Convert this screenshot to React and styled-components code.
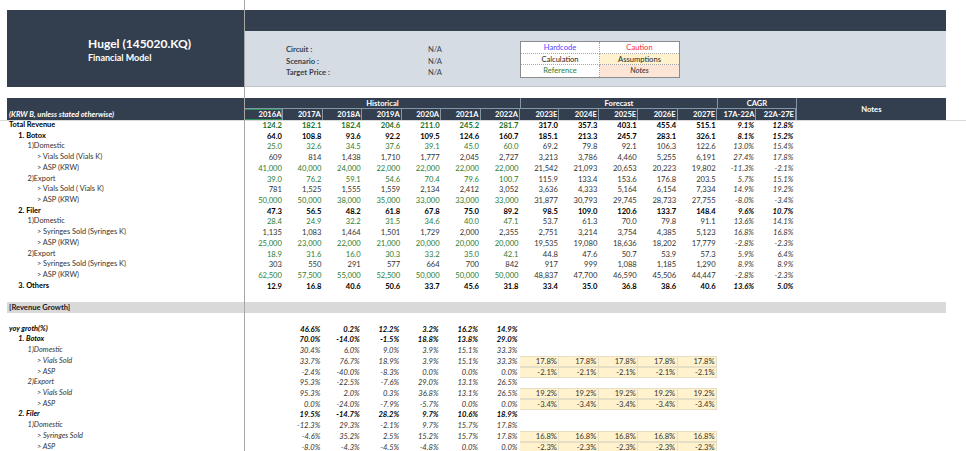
import styled, { createGlobalStyle } from "styled-components"

const GlobalStyle = createGlobalStyle`
    html, body {
        margin: 0;
        padding: 0;
        background: #FFFFFF;
    }
    body {
        width: 966px;
        height: 451px;
        overflow: hidden;
        font-family: Lato, "Open Sans", sans-serif;
    }
`

const GREEN = "#2E7D32"
const DARK = "#333F4F"

const YEARS = ["2016A", "2017A", "2018A", "2019A", "2020A", "2021A", "2022A", "2023E", "2024E", "2025E", "2026E", "2027E", "17A-22A", "22A-27E"]

const modelRows = [
    { label: "Total Revenue", level: 0, bold: true, hist: true, v: ["124.2", "182.1", "182.4", "204.6", "211.0", "245.2", "281.7", "317.0", "357.3", "403.1", "455.4", "515.1", "9.1%", "12.8%"] },
    { label: "1. Botox", level: 1, bold: true, v: ["64.0", "108.8", "93.6", "92.2", "109.5", "124.6", "160.7", "185.1", "213.3", "245.7", "283.1", "326.1", "8.1%", "15.2%"] },
    { label: "1)Domestic", level: 2, hist: true, v: ["25.0", "32.6", "34.5", "37.6", "39.1", "45.0", "60.0", "69.2", "79.8", "92.1", "106.3", "122.6", "13.0%", "15.4%"] },
    { label: "> Vials Sold (Vials K)", level: 3, v: ["609", "814", "1,438", "1,710", "1,777", "2,045", "2,727", "3,213", "3,786", "4,460", "5,255", "6,191", "27.4%", "17.8%"] },
    { label: "> ASP (KRW)", level: 3, hist: true, v: ["41,000", "40,000", "24,000", "22,000", "22,000", "22,000", "22,000", "21,542", "21,093", "20,653", "20,223", "19,802", "-11.3%", "-2.1%"] },
    { label: "2)Export", level: 2, hist: true, v: ["39.0", "76.2", "59.1", "54.6", "70.4", "79.6", "100.7", "115.9", "133.4", "153.6", "176.8", "203.5", "5.7%", "15.1%"] },
    { label: "> Vials Sold ( Vials K)", level: 3, v: ["781", "1,525", "1,555", "1,559", "2,134", "2,412", "3,052", "3,636", "4,333", "5,164", "6,154", "7,334", "14.9%", "19.2%"] },
    { label: "> ASP (KRW)", level: 3, hist: true, v: ["50,000", "50,000", "38,000", "35,000", "33,000", "33,000", "33,000", "31,877", "30,793", "29,745", "28,733", "27,755", "-8.0%", "-3.4%"] },
    { label: "2. Filer", level: 1, bold: true, v: ["47.3", "56.5", "48.2", "61.8", "67.8", "75.0", "89.2", "98.5", "109.0", "120.6", "133.7", "148.4", "9.6%", "10.7%"] },
    { label: "1)Domestic", level: 2, hist: true, v: ["28.4", "24.9", "32.2", "31.5", "34.6", "40.0", "47.1", "53.7", "61.3", "70.0", "79.8", "91.1", "13.6%", "14.1%"] },
    { label: "> Syringes Sold (Syringes K)", level: 3, v: ["1,135", "1,083", "1,464", "1,501", "1,729", "2,000", "2,355", "2,751", "3,214", "3,754", "4,385", "5,123", "16.8%", "16.8%"] },
    { label: "> ASP (KRW)", level: 3, hist: true, v: ["25,000", "23,000", "22,000", "21,000", "20,000", "20,000", "20,000", "19,535", "19,080", "18,636", "18,202", "17,779", "-2.8%", "-2.3%"] },
    { label: "2)Export", level: 2, hist: true, v: ["18.9", "31.6", "16.0", "30.3", "33.2", "35.0", "42.1", "44.8", "47.6", "50.7", "53.9", "57.3", "5.9%", "6.4%"] },
    { label: "> Syringes Sold (Syringes K)", level: 3, v: ["303", "550", "291", "577", "664", "700", "842", "917", "999", "1,088", "1,185", "1,290", "8.9%", "8.9%"] },
    { label: "> ASP (KRW)", level: 3, hist: true, v: ["62,500", "57,500", "55,000", "52,500", "50,000", "50,000", "50,000", "48,837", "47,700", "46,590", "45,506", "44,447", "-2.8%", "-2.3%"] },
    { label: "3. Others", level: 1, bold: true, v: ["12.9", "16.8", "40.6", "50.6", "33.7", "45.6", "31.8", "33.4", "35.0", "36.8", "38.6", "40.6", "13.6%", "5.0%"] },
]

const growthRows = [
    { label: "yoy groth(%)", level: 0, bold: true, v: ["46.6%", "0.2%", "12.2%", "3.2%", "16.2%", "14.9%"] },
    { label: "1. Botox", level: 1, bold: true, v: ["70.0%", "-14.0%", "-1.5%", "18.8%", "13.8%", "29.0%"] },
    { label: "1)Domestic", level: 2, v: ["30.4%", "6.0%", "9.0%", "3.9%", "15.1%", "33.3%"] },
    { label: "> Vials Sold", level: 3, v: ["33.7%", "76.7%", "18.9%", "3.9%", "15.1%", "33.3%"], assume: "17.8%" },
    { label: "> ASP", level: 3, v: ["-2.4%", "-40.0%", "-8.3%", "0.0%", "0.0%", "0.0%"], assume: "-2.1%" },
    { label: "2)Export", level: 2, v: ["95.3%", "-22.5%", "-7.6%", "29.0%", "13.1%", "26.5%"] },
    { label: "> Vials Sold", level: 3, v: ["95.3%", "2.0%", "0.3%", "36.8%", "13.1%", "26.5%"], assume: "19.2%" },
    { label: "> ASP", level: 3, v: ["0.0%", "-24.0%", "-7.9%", "-5.7%", "0.0%", "0.0%"], assume: "-3.4%" },
    { label: "2. Filer", level: 1, bold: true, v: ["19.5%", "-14.7%", "28.2%", "9.7%", "10.6%", "18.9%"] },
    { label: "1)Domestic", level: 2, v: ["-12.3%", "29.3%", "-2.1%", "9.7%", "15.7%", "17.8%"] },
    { label: "> Syringes Sold", level: 3, v: ["-4.6%", "35.2%", "2.5%", "15.2%", "15.7%", "17.8%"], assume: "16.8%" },
    { label: "> ASP", level: 3, v: ["-8.0%", "-4.3%", "-4.5%", "-4.8%", "0.0%", "0.0%"], assume: "-2.3%" },
]

export default function App() {
    return (
        <Page>
            <GlobalStyle />
            <FreezeColumn />
            <FreezeRow />
            <Banner>
                <BannerTitle>
                    <h1>Hugel (145020.KQ)</h1>
                    <h2>Financial Model</h2>
                </BannerTitle>
                <BannerBody>
                    <BannerStrip />
                    <BannerPanel>
                        <InfoList>
                            <dt>Circuit :</dt><dd>N/A</dd>
                            <dt>Scenario :</dt><dd>N/A</dd>
                            <dt>Target Price :</dt><dd>N/A</dd>
                        </InfoList>
                        <Legend>
                            <LegendCell $color="#4A4AFF">Hardcode</LegendCell>
                            <LegendCell $color="#FF2A3C">Caution</LegendCell>
                            <LegendCell>Calculation</LegendCell>
                            <LegendCell $bg="#FFF2CC">Assumptions</LegendCell>
                            <LegendCell $color={GREEN}>Reference</LegendCell>
                            <LegendCell $bg="#FCE4D6" $italic>Notes</LegendCell>
                        </Legend>
                    </BannerPanel>
                </BannerBody>
            </Banner>

            <TableHead>
                <UnitsCell>(KRW B, unless stated otherwise)</UnitsCell>
                <GroupCell $span={7}>Historical</GroupCell>
                <GroupCell $span={5}>Forecast</GroupCell>
                <GroupCell $span={2}>CAGR</GroupCell>
                <NotesHead>Notes</NotesHead>
                {YEARS.map((y, i) => <YearCell key={y} $selected={i === 0}>{y}</YearCell>)}
            </TableHead>

            {modelRows.map((r, i) => (
                <Row key={i}>
                    <Label $level={r.level} $bold={r.bold}>{r.label}</Label>
                    {r.v.map((n, j) => (
                        <Num key={j} $bold={r.bold} $green={r.hist && j < 7} $italic={j >= 12}>{n}</Num>
                    ))}
                </Row>
            ))}

            <BlankRow />
            <SectionBar>[Revenue Growth]</SectionBar>
            <BlankRow />

            {growthRows.map((r, i) => (
                <Row key={i}>
                    <Label $level={r.level} $bold={r.bold} $italic>{r.label}</Label>
                    <Num />
                    {r.v.map((n, j) => <Num key={j} $bold={r.bold} $italic>{n}</Num>)}
                    {r.assume && [0, 1, 2, 3, 4].map((k) => <AssumeCell key={k}>{r.assume}</AssumeCell>)}
                </Row>
            ))}
        </Page>
    )
}

const Page = styled.div`
    position: relative;
    width: 966px;
    height: 451px;
    overflow: hidden;
    padding: 10px 0 0 7px;
    box-sizing: border-box;
    color: #262626;
`
const FreezeColumn = styled.div`
    position: absolute;
    left: 244px;
    top: 0;
    bottom: 0;
    width: 1px;
    background-color: #A6A6A6;
    z-index: 3;
`
const FreezeRow = styled.div`
    position: absolute;
    left: 0;
    right: 0;
    top: 120px;
    height: 1px;
    background-color: #DADADA;
    z-index: 0;
`
const Banner = styled.div`
    display: flex;
    width: 939px;
    height: 77px;
    margin-bottom: 11px;
`
const BannerTitle = styled.div`
    width: 237px;
    background-color: ${DARK};
    color: #FFFFFF;
    padding-top: 26px;
    box-sizing: border-box;
    h1 {
        margin: 0 0 0 81px;
        font-size: 12px;
        line-height: 16px;
        font-weight: 700;
    }
    h2 {
        margin: 0 0 0 81px;
        font-size: 9px;
        line-height: 12px;
        font-weight: 700;
    }
`
const BannerBody = styled.div`
    flex: 1;
    display: flex;
    flex-direction: column;
`
const BannerStrip = styled.div`
    height: 21px;
    background-color: ${DARK};
`
const BannerPanel = styled.div`
    flex: 1;
    display: flex;
    align-items: flex-start;
    background-color: #D6DCE4;
    border-bottom: 1px solid #BFC5CC;
    padding: 10px 0 0 42px;
`
const InfoList = styled.dl`
    display: grid;
    grid-template-columns: 142px 92px;
    grid-auto-rows: 11.7px;
    margin: 2px 0 0;
    font-size: 7.6px;
    line-height: 12px;
    color: #333F4F;
    dt {
        font-weight: 700;
    }
    dd {
        margin: 0;
    }
`
const Legend = styled.div`
    display: grid;
    grid-template-columns: 79px 79px;
    grid-auto-rows: 11.5px;
    border: 1px solid #8C8C8C;
    background-color: #FFFFFF;
`
const LegendCell = styled.div`
    text-align: center;
    font-size: 7.6px;
    line-height: 11.5px;
    color: ${(props) => props.$color || "#262626"};
    background-color: ${(props) => props.$bg || "#FFFFFF"};
    font-style: ${(props) => (props.$italic ? "italic" : "normal")};
    border-bottom: 1px dotted #A6A6A6;
    &:nth-child(odd) {
        border-right: 1px dotted #A6A6A6;
    }
    &:nth-last-child(-n + 2) {
        border-bottom: none;
    }
`
const TableHead = styled.div`
    display: grid;
    width: 939px;
    grid-template-columns: 237px repeat(14, 39.43px) 150px;
    grid-template-rows: 11px 11px;
    background-color: ${DARK};
    color: #FFFFFF;
    font-size: 7.6px;
    font-weight: 700;
`
const UnitsCell = styled.div`
    grid-column: 1;
    grid-row: 1 / 3;
    align-self: end;
    padding-left: 2px;
    font-style: italic;
    line-height: 11px;
`
const GroupCell = styled.div`
    grid-column: span ${(props) => props.$span};
    grid-row: 1;
    text-align: center;
    line-height: 11px;
    border-left: 1px solid #8497A8;
    border-bottom: 1px solid #8497A8;
`
const NotesHead = styled.div`
    grid-column: 16;
    grid-row: 1 / 3;
    border-left: 1px solid #8497A8;
    text-align: center;
    line-height: 22px;
`
const YearCell = styled.div`
    grid-row: 2;
    text-align: right;
    padding-right: 1px;
    line-height: 11px;
    border-right: 1px solid #8497A8;
    box-shadow: ${(props) => (props.$selected ? "inset 0 0 0 1px #2F8F5B" : "none")};
`
const Row = styled.div`
    position: relative;
    z-index: 1;
    display: grid;
    grid-template-columns: 237px repeat(14, 39.43px);
    height: 10.73px;
    font-size: 7.6px;
    line-height: 10.73px;
    white-space: nowrap;
`
const BlankRow = styled.div`
    height: 10.73px;
`
const SectionBar = styled.div`
    width: 939px;
    height: 10.73px;
    background-color: #D9D9D9;
    font-size: 7.6px;
    line-height: 10.73px;
    font-weight: 700;
    padding-left: 2px;
    box-sizing: border-box;
    color: #1A1A1A;
`
const Label = styled.div`
    padding-left: ${(props) => 2 + props.$level * 9.3}px;
    font-size: 7.4px;
    font-weight: ${(props) => (props.$bold ? 700 : 400)};
    font-style: ${(props) => (props.$italic ? "italic" : "normal")};
    color: ${(props) => (props.$bold ? "#000000" : "#333333")};
`
const Num = styled.div`
    text-align: right;
    padding-right: ${(props) => (props.$italic ? 2.5 : 1.5)}px;
    font-weight: ${(props) => (props.$bold ? 700 : 400)};
    font-style: ${(props) => (props.$italic ? "italic" : "normal")};
    color: ${(props) => {
        if (props.$green) return props.$bold ? "#1B701F" : GREEN
        return props.$bold ? "#000000" : "#333333"
    }};
`
const AssumeCell = styled.div`
    text-align: right;
    padding-right: 1.5px;
    background-color: #FFF2CC;
    border-right: 1px solid #E6DFC6;
    border-bottom: 1px solid #E6DFC6;
    border-top: 1px solid #E6DFC6;
    box-sizing: border-box;
    line-height: 9px;
    color: #333333;
`
